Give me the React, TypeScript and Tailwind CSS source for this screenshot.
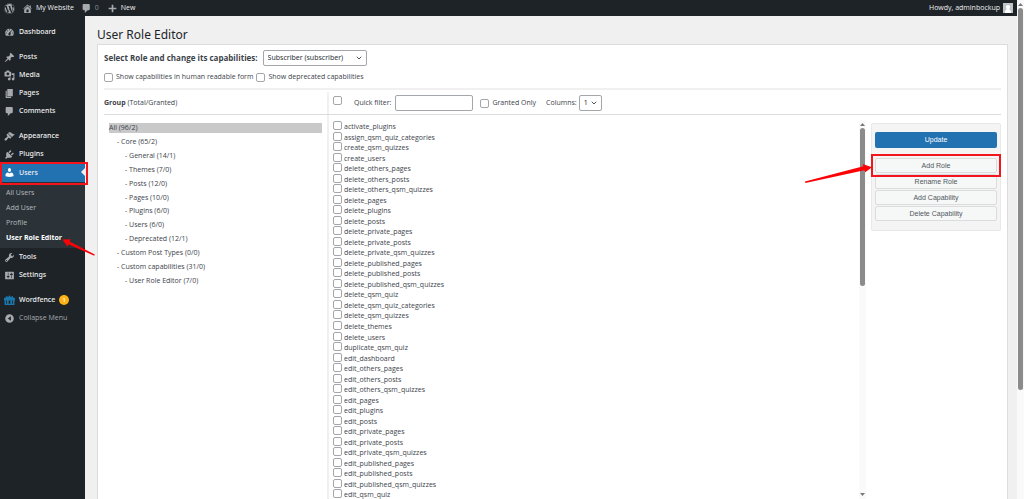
import * as React from 'react';
import { FaWordpress } from 'react-icons/fa';
import { ChevronDown } from 'lucide-react';
import clsx from 'clsx';

const icons = {
	home: 'M16 8.5l1.53 1.53-1.06 1.06L10 4.6l-6.47 6.49-1.06-1.06L10 2.5l4 4v-2h2v4zm-6-2.46l6 5.99V18H4v-5.97zM12 17v-5H8v5h4z',
	plus: 'M17 8.500v3h-5.500V17h-3v-5.500H3v-3h5.500V3h3v5.500z',
	dashboard:
		'M3.76 16h12.48c1.1-1.37 1.76-3.11 1.76-5 0-4.42-3.58-8-8-8s-8 3.58-8 8c0 1.89.66 3.63 1.76 5zM10 4c.55 0 1 .45 1 1s-.45 1-1 1-1-.45-1-1 .45-1 1-1zM6 6c.55 0 1 .45 1 1s-.45 1-1 1-1-.45-1-1 .45-1 1-1zm8 0c.55 0 1 .45 1 1s-.45 1-1 1-1-.45-1-1 .45-1 1-1zm-5.37 5.55L12 7v6c0 1.1-.9 2-2 2s-2-.9-2-2c0-.57.24-1.08.63-1.45zM4 10c.55 0 1 .45 1 1s-.45 1-1 1-1-.45-1-1 .45-1 1-1zm12 0c.55 0 1 .45 1 1s-.45 1-1 1-1-.45-1-1 .45-1 1-1z',
	post: 'M10.44 3.02l1.82-1.82 6.36 6.35-1.83 1.82c-1.05-.68-2.48-.57-3.41.36l-.75.75c-.92.93-1.04 2.35-.35 3.41l-1.83 1.82-2.41-2.41-2.8 2.79c-.42.42-3.38 2.71-3.8 2.29s1.86-3.39 2.28-3.81l2.79-2.79L4.1 9.36l1.83-1.82c1.05.69 2.48.57 3.4-.36l.75-.75c.93-.92 1.05-2.35.36-3.41z',
	media: 'M13 11V4c0-.55-.45-1-1-1h-1.67L9 1H5L3.67 3H2c-.55 0-1 .45-1 1v7c0 .55.45 1 1 1h10c.55 0 1-.45 1-1zM7 4.5c1.38 0 2.5 1.12 2.5 2.5S8.38 9.5 7 9.5 4.5 8.38 4.5 7 5.62 4.5 7 4.5zM14 6h5v10.5c0 1.38-1.12 2.5-2.5 2.5S14 17.88 14 16.5s1.12-2.5 2.5-2.5c.17 0 .34.02.5.05V9h-3V6zm-4 8.05V13h2v3.5c0 1.38-1.12 2.5-2.5 2.5S7 17.88 7 16.5 8.12 14 9.5 14c.17 0 .34.02.5.05z',
	page: 'M6 15V2h10v13H6zm-1 1h8v2H3V5h2v11z',
	comments:
		'M5 2h9c1.1 0 2 .9 2 2v7c0 1.1-.9 2-2 2h-2l-5 5v-5H5c-1.1 0-2-.9-2-2V4c0-1.1.9-2 2-2z',
	appearance:
		'M14.48 11.06L7.41 3.99l1.5-1.5c.5-.56 2.3-.47 3.51.32 1.21.8 1.43 1.28 2.91 2.1 1.18.64 2.45 1.26 4.45.85zm-.71.71L6.7 4.7 4.93 6.47c-.39.39-.39 1.02 0 1.41l1.06 1.06c.39.39.39 1.03 0 1.42-.6.6-1.43 1.11-2.21 1.69-.35.26-.7.53-1.01.84C1.43 14.23.4 16.08 1.4 17.07c.99 1 2.84-.03 4.18-1.36.31-.31.58-.66.85-1.02.57-.78 1.08-1.61 1.69-2.21.39-.39 1.02-.39 1.41 0l1.06 1.06c.39.39 1.02.39 1.41 0z',
	plugins:
		'M13.11 4.36L9.87 7.6 8 5.73l3.24-3.24c.35-.34 1.05-.2 1.56.32.52.51.66 1.21.31 1.55zm-8 1.77l.91-1.12 9.01 9.01-1.19.84c-.71.71-2.63 1.16-3.82 1.16H6.14L4.9 17.26c-.59.59-1.54.59-2.12 0-.59-.58-.59-1.53 0-2.12l1.24-1.24v-3.88c0-1.13.4-3.19 1.09-3.89zm7.26 3.97l3.24-3.24c.34-.35 1.04-.21 1.55.31.52.51.66 1.21.31 1.55l-3.24 3.25z',
	users: 'M10 9.25c-2.27 0-2.73-3.44-2.73-3.44C7 4.02 7.82 2 9.97 2c2.16 0 2.98 2.02 2.71 3.81 0 0-.41 3.44-2.68 3.44zm0 2.57L12.72 10c2.39 0 4.52 2.33 4.52 4.53v2.49s-3.65 1.13-7.24 1.13c-3.65 0-7.24-1.13-7.24-1.13v-2.49c0-2.25 1.94-4.48 4.47-4.48z',
	tools: 'M16.68 9.77c-1.34 1.34-3.3 1.67-4.95.99l-5.41 6.52c-.99.99-2.59.99-3.58 0s-.99-2.59 0-3.57l6.52-5.42c-.68-1.65-.35-3.61.99-4.95 1.28-1.28 3.12-1.62 4.72-1.06l-2.89 2.89 2.82 2.82 2.86-2.87c.53 1.58.18 3.39-1.08 4.65zM3.81 16.21c.4.39 1.04.39 1.43 0 .4-.4.4-1.04 0-1.43-.39-.4-1.03-.4-1.43 0-.39.39-.39 1.03 0 1.43z',
	settings:
		'M18 16V4c0-.55-.45-1-1-1H3c-.55 0-1 .45-1 1v12c0 .55.45 1 1 1h14c.55 0 1-.45 1-1zM8 11h1c.55 0 1 .45 1 1s-.45 1-1 1H8v1.5c0 .28-.22.5-.5.5s-.5-.22-.5-.5V13H6c-.55 0-1-.45-1-1s.45-1 1-1h1V5.5c0-.28.22-.5.5-.5s.5.22.5.5V11zm5-2h-1c-.55 0-1-.45-1-1s.45-1 1-1h1V5.5c0-.28.22-.5.5-.5s.5.22.5.5V7h1c.55 0 1 .45 1 1s-.45 1-1 1h-1v5.5c0 .28-.22.5-.5.5s-.5-.22-.5-.5V9z',
	wordfence:
		'M0 5.500L4 4V2h2v1.500l3-.7V1h2v1.800l3 .7V2h2v2l4 1.500V10h-1v8h-3v-8h-1.500v8h-3v-8h-3v8h-3v-8H4v8H1v-8H0zM1 16h18v2H1z',
	collapse:
		'M10 2.200a7.800 7.800 0 1 0 0 15.600 7.800 7.800 0 1 0 0-15.600zM12.500 6v8l-5.500-4z',
};

type IconName = keyof typeof icons;

function Icon({ name, className }: { name: IconName; className?: string }) {
	return (
		<svg
			viewBox="0 0 20 20"
			fill="currentColor"
			fillRule={name === 'wordfence' ? 'nonzero' : 'evenodd'}
			aria-hidden="true"
			className={clsx('size-[11px] shrink-0', className)}
		>
			<path d={icons[name]} />
		</svg>
	);
}

const menuGroups: { title: string; icon: IconName }[][] = [
	[{ title: 'Dashboard', icon: 'dashboard' }],
	[
		{ title: 'Posts', icon: 'post' },
		{ title: 'Media', icon: 'media' },
		{ title: 'Pages', icon: 'page' },
		{ title: 'Comments', icon: 'comments' },
	],
	[
		{ title: 'Appearance', icon: 'appearance' },
		{ title: 'Plugins', icon: 'plugins' },
		{ title: 'Users', icon: 'users' },
		{ title: 'Tools', icon: 'tools' },
		{ title: 'Settings', icon: 'settings' },
	],
	[{ title: 'Wordfence', icon: 'wordfence' }],
];

const usersSubmenu = ['All Users', 'Add User', 'Profile', 'User Role Editor'];

const groups = [
	{ label: 'All (96/2)', level: 0 },
	{ label: '- Core (65/2)', level: 1 },
	{ label: '- General (14/1)', level: 2 },
	{ label: '- Themes (7/0)', level: 2 },
	{ label: '- Posts (12/0)', level: 2 },
	{ label: '- Pages (10/0)', level: 2 },
	{ label: '- Plugins (6/0)', level: 2 },
	{ label: '- Users (6/0)', level: 2 },
	{ label: '- Deprecated (12/1)', level: 2 },
	{ label: '- Custom Post Types (0/0)', level: 1 },
	{ label: '- Custom capabilities (31/0)', level: 1 },
	{ label: '- User Role Editor (7/0)', level: 2 },
];

const capabilities = [
	'activate_plugins',
	'assign_qsm_quiz_categories',
	'create_qsm_quizzes',
	'create_users',
	'delete_others_pages',
	'delete_others_posts',
	'delete_others_qsm_quizzes',
	'delete_pages',
	'delete_plugins',
	'delete_posts',
	'delete_private_pages',
	'delete_private_posts',
	'delete_private_qsm_quizzes',
	'delete_published_pages',
	'delete_published_posts',
	'delete_published_qsm_quizzes',
	'delete_qsm_quiz',
	'delete_qsm_quiz_categories',
	'delete_qsm_quizzes',
	'delete_themes',
	'delete_users',
	'duplicate_qsm_quiz',
	'edit_dashboard',
	'edit_others_pages',
	'edit_others_posts',
	'edit_others_qsm_quizzes',
	'edit_pages',
	'edit_plugins',
	'edit_posts',
	'edit_private_pages',
	'edit_private_posts',
	'edit_private_qsm_quizzes',
	'edit_published_pages',
	'edit_published_posts',
	'edit_published_qsm_quizzes',
	'edit_qsm_quiz',
];

function Checkbox(props: React.ComponentProps<'input'>) {
	return (
		<input
			type="checkbox"
			{...props}
			className="size-[9px] shrink-0 appearance-none rounded-[2px] border border-[#a3a6aa] bg-white checked:bg-[#2271b1]"
		/>
	);
}

function Select({
	id,
	options,
	className,
}: {
	id: string;
	options: string[];
	className?: string;
}) {
	return (
		<div className={clsx('relative', className)}>
			<select
				id={id}
				className="block h-4 w-full appearance-none rounded-[2px] border border-[#a3a6aa] bg-white pl-1 font-['Noto_Sans',sans-serif] text-[7px] leading-3 text-[#2c3338]"
			>
				{options.map((option) => (
					<option key={option}>{option}</option>
				))}
			</select>
			<ChevronDown
				size={8}
				strokeWidth={3}
				className="pointer-events-none absolute top-1 right-1 text-[#50575e]"
			/>
		</div>
	);
}

function Toolbar() {
	return (
		<header className="flex h-4 items-center bg-[#1d2327] pr-1 pl-1 text-[7px] leading-4 text-[#f0f0f1]">
			<a href="#wp" aria-label="About WordPress" className="text-[#a7aaad]">
				<FaWordpress size={11} />
			</a>
			<a href="#site" className="ml-[7px] flex items-center gap-[3px] font-medium">
				<Icon name="home" className="text-[#a7aaad]" />
				My Website
			</a>
			<a href="#comments" className="ml-[7px] flex items-center gap-[3px] text-[#8c8f94]">
				<Icon name="comments" className="text-[#a7aaad]" />0
			</a>
			<a href="#new" className="ml-2 flex items-center gap-[3px] font-medium">
				<Icon name="plus" className="text-[#a7aaad]" />
				New
			</a>
			<a href="#account" className="ml-auto flex items-center gap-[3px]">
				Howdy, adminbockup
				<svg viewBox="0 0 10 10" className="size-[10px]" aria-hidden="true">
					<path fill="#c3c4c7" d="M0 0h10v10H0z" />
					<path
						fill="#fff"
						d="M5 2c1.300 0 2 .9 2 2.100C7 5 6.600 5.700 6.100 6.200 7.300 6.600 8 7.600 8 10H2c0-2.400.7-3.400 1.900-3.800C3.400 5.700 3 5 3 4.100 3 2.900 3.700 2 5 2z"
					/>
				</svg>
			</a>
		</header>
	);
}

function MenuItem({ title, icon }: { title: string; icon: IconName }) {
	const current = title === 'Users';
	return (
		<li className="relative">
			<a
				href={`#${title.toLowerCase()}`}
				className={clsx(
					'relative flex items-center gap-1 pl-1 text-[7px] font-medium text-[#f0f0f1]',
					current ? 'h-[19px] bg-[#2271b1]' : 'h-[18px]'
				)}
			>
				<Icon
					name={icon}
					className={clsx(
						current && 'text-white',
						icon === 'wordfence' && 'text-[#1b77ab]',
						!current && icon !== 'wordfence' && 'text-[#a7aaad]'
					)}
				/>
				{title}
				{icon === 'wordfence' && (
					<span className="flex size-[10px] items-center justify-center rounded-full bg-[#fcb214] text-[6px] text-white">
						1
					</span>
				)}
				{current && (
					<span className="absolute top-[5px] right-0 border-y-4 border-r-4 border-y-transparent border-r-[#f0f0f1]" />
				)}
			</a>
			{current && (
				<>
					<ul className="bg-[#2c3338] py-[3px]">
						{usersSubmenu.map((item) => (
							<li key={item}>
								<a
									href="#submenu"
									className={clsx(
										"flex h-[15px] items-center pl-[6px] font-['Open_Sans',sans-serif] text-[7px]",
										item === 'User Role Editor'
											? 'font-bold text-white'
											: 'text-[#b4b9be]'
									)}
								>
									{item}
								</a>
							</li>
						))}
					</ul>
					{/* Step markers */}
					<span className="pointer-events-none absolute -top-px -right-[3px] left-0 h-[23px] border-2 border-[#f3141c]" />
					<svg
						viewBox="0 0 33 18"
						className="pointer-events-none absolute -right-[10px] bottom-[-9px] z-10 h-[18px] w-[33px]"
						aria-hidden="true"
					>
						<path fill="#fb0207" d="M.5.5L8.500.300 7.600 2.600 32.800 15.400l-.6 1.300L6.500 5.200 5.400 7.600z" />
					</svg>
				</>
			)}
		</li>
	);
}

function Sidebar() {
	return (
		<nav
			aria-label="Main menu"
			className="flex w-[85px] shrink-0 flex-col gap-[7px] bg-[#1d2327] pt-[7px] font-['Noto_Sans',sans-serif]"
		>
			{menuGroups.map((group) => (
				<ul key={group[0].title}>
					{group.map((item) => (
						<MenuItem key={item.title} {...item} />
					))}
					{group[0].title === 'Wordfence' && (
						<li>
							<button className="flex h-[18px] items-center gap-1 pl-1 font-['Open_Sans',sans-serif] text-[7px] text-[#a7aaad]">
								<Icon name="collapse" />
								Collapse Menu
							</button>
						</li>
					)}
				</ul>
			))}
		</nav>
	);
}

function Scrollbar({ thumb, end }: { thumb: string; end?: boolean }) {
	return (
		<div className="flex w-[7px] shrink-0 flex-col items-center bg-[#fafafa] py-[2px]" aria-hidden="true">
			<svg viewBox="0 0 5 5" className="size-[5px] shrink-0 fill-[#77777a]">
				<path d="M0 4l2.500-3L5 4z" />
			</svg>
			<span className={clsx('mt-px w-[5px] shrink-0 rounded-full bg-[#8b8b8b]', thumb)} />
			{end && (
				<svg viewBox="0 0 5 5" className="mt-auto size-[5px] shrink-0 fill-[#77777a]">
					<path d="M0 1l2.500 3L5 1z" />
				</svg>
			)}
		</div>
	);
}

function ActionButton({ children }: { children: React.ReactNode }) {
	return (
		<button className="block h-[15px] w-full rounded-[2px] border border-[#dcdcde] bg-[#f6f7f7] text-center text-[#50575e]">
			{children}
		</button>
	);
}

function Actions() {
	return (
		<div className="mt-[8px] w-[130px] shrink-0 self-start rounded-[2px] border border-[#e8e8e8] bg-[#f4f4f4] px-[3px] pt-[8px] pb-[9px] font-['Liberation_Sans',sans-serif] text-[7px] leading-3">
			<button className="block h-4 w-full rounded-[2px] bg-[#2271b1] text-white">Update</button>
			<div className="mt-[10px] flex flex-col gap-px">
				<div className="relative">
					<ActionButton>Add Role</ActionButton>
					<span className="pointer-events-none absolute -inset-x-1 -top-1 h-[23px] border-2 border-[#f3141c]" />
					<svg
						viewBox="0 0 68 20"
						className="pointer-events-none absolute top-[5px] right-[124px] h-5 w-[68px]"
						aria-hidden="true"
					>
						<path fill="#fb0207" d="M0 18.500L58.300 3.200 57.600.9 67 4.200 60.300 9.300l-.9-2.100L.4 19.900z" />
					</svg>
				</div>
				<ActionButton>Rename Role</ActionButton>
				<ActionButton>Add Capability</ActionButton>
				<ActionButton>Delete Capability</ActionButton>
			</div>
		</div>
	);
}

function GroupList() {
	return (
		<div className="w-[223px] shrink-0 px-[5px] pt-[6px]">
			<ul className="grid h-[167px] auto-rows-fr">
				{groups.map(({ label, level }) => (
					<li key={label} className="flex items-center">
						<a
							href="#group"
							className={clsx(
								'block w-full leading-[10px]',
								level === 0 && 'bg-[#c9c9c9]',
								level === 1 && 'pl-2',
								level === 2 && 'pl-4'
							)}
						>
							{label}
						</a>
					</li>
				))}
			</ul>
		</div>
	);
}

function RoleEditor() {
	return (
		<section className="flex min-h-0 flex-1 flex-col border border-b-0 border-[#dcdcde] bg-white px-[6px]">
			<div className="border-b-2 border-[#f0f0f1] pt-[5px] pb-[6px]">
				<div className="flex items-center gap-[5px]">
					<label htmlFor="role" className="text-[8px] leading-4 font-bold text-[#3c434a]">
						Select Role and change its capabilities:
					</label>
					<Select id="role" options={['Subscriber (subscriber)']} className="w-[104px]" />
				</div>
				<div className="mt-[6px] flex items-center gap-[3px]">
					<label className="flex items-center gap-[3px]">
						<Checkbox /> Show capabilities in human readable form
					</label>
					<label className="flex items-center gap-[3px]">
						<Checkbox /> Show deprecated capabilities
					</label>
				</div>
			</div>

			<div className="mt-[2px] flex h-[23px] shrink-0 items-center border-b border-[#dcdcde]">
				<div className="w-[223px] shrink-0">
					<b>Group</b> (Total/Granted)
				</div>
				<div className="flex h-full flex-1 items-center border-l-2 border-[#f0f0f1] pl-1">
					<div className="mb-[6px] flex">
						<Checkbox aria-label="Select all" />
					</div>
					<label htmlFor="filter" className="ml-3">
						Quick filter:
					</label>
					<input
						id="filter"
						type="text"
						className="ml-1 h-4 w-[78px] rounded-[2px] border border-[#a3a6aa] bg-white px-1"
					/>
					<label className="ml-[7px] flex items-center gap-[3px]">
						<Checkbox /> Granted Only
					</label>
					<label htmlFor="columns" className="ml-[10px]">
						Columns:
					</label>
					<Select id="columns" options={['1', '2', '3']} className="ml-[2px] w-[23px]" />
				</div>
			</div>

			<div className="flex min-h-0 flex-1">
				<GroupList />
				<div className="flex min-w-0 flex-1 overflow-hidden border-l-2 border-[#f0f0f1] pl-1">
					<ul className="mt-[6px] grid h-[379px] flex-1 auto-rows-fr">
						{capabilities.map((cap) => (
							<li key={cap} className="min-h-0">
								<label className="flex items-start gap-[2px]">
									<Checkbox />
									<span className="leading-[11px]">{cap}</span>
								</label>
							</li>
						))}
					</ul>
					<div className="mt-[5px] mr-[5px] flex">
						<Scrollbar thumb="h-[158px]" end />
					</div>
				</div>
				<Actions />
			</div>
		</section>
	);
}

export default function App() {
	return (
		<div className="flex h-screen overflow-hidden bg-[#f0f0f1] font-['Open_Sans',sans-serif] text-[7px] leading-[10px] text-[#3c434a]">
			<div className="flex min-w-0 flex-1 flex-col">
				<Toolbar />
				<div className="flex min-h-0 flex-1">
					<Sidebar />
					<main className="flex min-w-0 flex-1 flex-col pt-[11px] pr-[9px] pl-3">
						<h1 className="mb-px font-['Noto_Sans',sans-serif] text-[12px] leading-4 text-[#1d2327]">
							User Role Editor
						</h1>
						<RoleEditor />
					</main>
				</div>
			</div>
			<Scrollbar thumb="h-[382px]" />
		</div>
	);
}
